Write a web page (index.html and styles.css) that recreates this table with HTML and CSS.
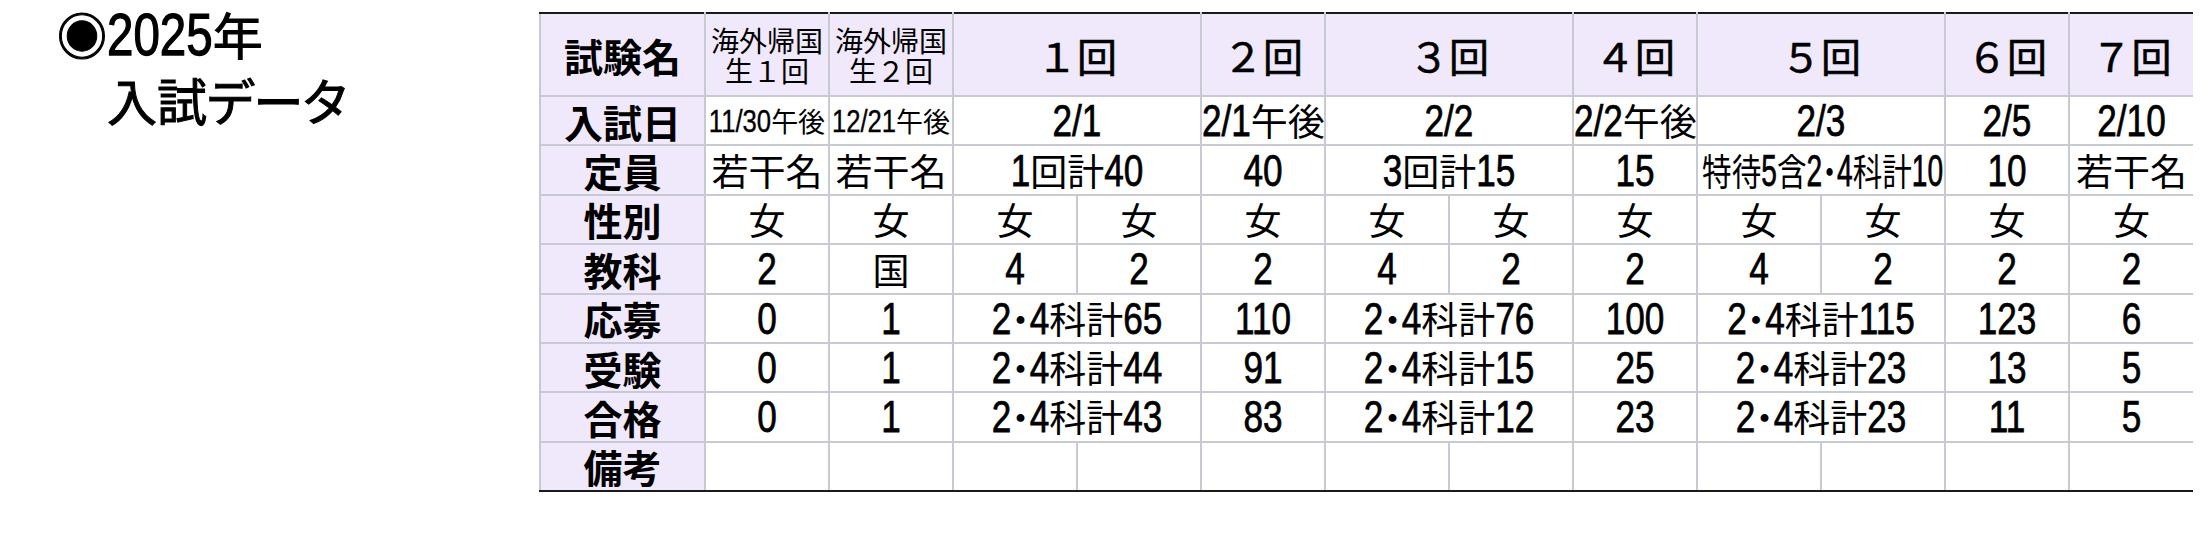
FILE: index.html
```html
<!DOCTYPE html>
<html lang="ja">
<head>
<meta charset="utf-8">
<title>2025年 入試データ</title>
<link rel="stylesheet" href="styles.css">
</head>
<body>
<div class="page">
  <div class="title">
    <div class="line1">◉<span class="n">2025</span>年</div>
    <div class="line2">入試データ</div>
  </div>
  <table class="exam">
    <colgroup>
      <col class="c-label">
      <col class="c-data"><col class="c-data"><col class="c-data"><col class="c-data">
      <col class="c-data"><col class="c-data"><col class="c-data"><col class="c-data">
      <col class="c-data"><col class="c-data"><col class="c-data"><col class="c-data">
    </colgroup>
    <thead>
      <tr>
        <th class="lab">試験名</th>
        <th class="hd-small">海外帰国<br>生１回</th>
        <th class="hd-small">海外帰国<br>生２回</th>
        <th class="rnd" colspan="2">１回</th>
        <th class="rnd">２回</th>
        <th class="rnd" colspan="2">３回</th>
        <th class="rnd">４回</th>
        <th class="rnd" colspan="2">５回</th>
        <th class="rnd">６回</th>
        <th class="rnd">７回</th>
      </tr>
    </thead>
    <tbody>
      <tr>
        <th class="lab">入試日</th>
        <td class="small"><span class="n">11/30</span>午後</td>
        <td class="small"><span class="n">12/21</span>午後</td>
        <td colspan="2"><span class="n">2/1</span></td>
        <td><span class="n">2/1</span>午後</td>
        <td colspan="2"><span class="n">2/2</span></td>
        <td><span class="n">2/2</span>午後</td>
        <td colspan="2"><span class="n">2/3</span></td>
        <td><span class="n">2/5</span></td>
        <td><span class="n">2/10</span></td>
      </tr>
      <tr>
        <th class="lab">定員</th>
        <td>若干名</td>
        <td>若干名</td>
        <td colspan="2"><span class="n">1</span>回計<span class="n">40</span></td>
        <td><span class="n">40</span></td>
        <td colspan="2"><span class="n">3</span>回計<span class="n">15</span></td>
        <td><span class="n">15</span></td>
        <td colspan="2"><span class="sq">特待<span class="n">5</span>含<span class="n">2</span>・<span class="n">4</span>科計<span class="n">10</span></span></td>
        <td><span class="n">10</span></td>
        <td>若干名</td>
      </tr>
      <tr>
        <th class="lab">性別</th>
        <td>女</td><td>女</td><td>女</td><td>女</td><td>女</td><td>女</td>
        <td>女</td><td>女</td><td>女</td><td>女</td><td>女</td><td>女</td>
      </tr>
      <tr>
        <th class="lab">教科</th>
        <td><span class="n">2</span></td>
        <td>国</td>
        <td><span class="n">4</span></td>
        <td><span class="n">2</span></td>
        <td><span class="n">2</span></td>
        <td><span class="n">4</span></td>
        <td><span class="n">2</span></td>
        <td><span class="n">2</span></td>
        <td><span class="n">4</span></td>
        <td><span class="n">2</span></td>
        <td><span class="n">2</span></td>
        <td><span class="n">2</span></td>
      </tr>
      <tr>
        <th class="lab">応募</th>
        <td><span class="n">0</span></td>
        <td><span class="n">1</span></td>
        <td colspan="2"><span class="n">2</span>・<span class="n">4</span>科計<span class="n">65</span></td>
        <td><span class="n">110</span></td>
        <td colspan="2"><span class="n">2</span>・<span class="n">4</span>科計<span class="n">76</span></td>
        <td><span class="n">100</span></td>
        <td colspan="2"><span class="n">2</span>・<span class="n">4</span>科計<span class="n">115</span></td>
        <td><span class="n">123</span></td>
        <td><span class="n">6</span></td>
      </tr>
      <tr>
        <th class="lab">受験</th>
        <td><span class="n">0</span></td>
        <td><span class="n">1</span></td>
        <td colspan="2"><span class="n">2</span>・<span class="n">4</span>科計<span class="n">44</span></td>
        <td><span class="n">91</span></td>
        <td colspan="2"><span class="n">2</span>・<span class="n">4</span>科計<span class="n">15</span></td>
        <td><span class="n">25</span></td>
        <td colspan="2"><span class="n">2</span>・<span class="n">4</span>科計<span class="n">23</span></td>
        <td><span class="n">13</span></td>
        <td><span class="n">5</span></td>
      </tr>
      <tr>
        <th class="lab">合格</th>
        <td><span class="n">0</span></td>
        <td><span class="n">1</span></td>
        <td colspan="2"><span class="n">2</span>・<span class="n">4</span>科計<span class="n">43</span></td>
        <td><span class="n">83</span></td>
        <td colspan="2"><span class="n">2</span>・<span class="n">4</span>科計<span class="n">12</span></td>
        <td><span class="n">23</span></td>
        <td colspan="2"><span class="n">2</span>・<span class="n">4</span>科計<span class="n">23</span></td>
        <td><span class="n">11</span></td>
        <td><span class="n">5</span></td>
      </tr>
      <tr class="last">
        <th class="lab">備考</th>
        <td></td><td></td><td></td><td></td><td></td><td></td>
        <td></td><td></td><td></td><td></td><td></td><td></td>
      </tr>
    </tbody>
  </table>
</div>
</body>
</html>
```

FILE: styles.css
```css
body {
  margin: 0;
  background: #ffffff;
  color: #000000;
  font-family: "Noto Sans CJK JP", sans-serif;
}

.page {
  display: flex;
  align-items: flex-start;
}

.title {
  flex: 0 0 539px;
  box-sizing: border-box;
  padding-left: 57px;
  font-size: 50px;
  line-height: 66px;
  font-weight: 400;
  -webkit-text-stroke: 1px #000000;
  font-feature-settings: "palt";
}

.title .line2 {
  padding-left: 50px;
}

/* tall, narrow numerals */
.n {
  display: inline-block;
  font-family: "Liberation Sans", Arial, sans-serif;
  font-size: 0.95em;
  line-height: 1;
  transform: scaleY(1.25);
  transform-origin: 50% 0.85em;
}

.exam .n {
  -webkit-text-stroke: 0.6px #000000;
}

.exam {
  margin-top: 12px;
  border-collapse: collapse;
  table-layout: fixed;
  width: 1653px;
}

.c-label { width: 165px; }
.c-data { width: 124px; }

.exam th,
.exam td {
  border: 2px solid #c8cad3;
  padding: 0;
  text-align: center;
  vertical-align: middle;
  white-space: nowrap;
  font-size: 37px;
  line-height: 40px;
  font-weight: 400;
}

.exam td {
  font-feature-settings: "palt";
}

.exam th:last-child,
.exam td:last-child {
  border-right-style: none;
}

.exam thead tr { height: 83px; }
.exam tbody tr { height: 49.4px; }

.exam thead th {
  background: #efe9fb;
  border-top: 2px solid #1a1a1a;
}

.exam tr.last th,
.exam tr.last td {
  border-bottom: 2px solid #1a1a1a;
}

.exam .lab {
  background: #efe9fb;
  font-weight: 700;
  font-size: 39px;
}

.exam .rnd {
  font-size: 40px;
  -webkit-text-stroke: 0.6px #000000;
}

.exam .hd-small {
  font-size: 28px;
  line-height: 30px;
}

.exam .small {
  font-size: 27px;
}

.exam .small .n {
  -webkit-text-stroke: 0.3px #000000;
}

.sq {
  display: inline-block;
  transform: scaleX(0.8);
  margin: 0 -26px;
}
```
